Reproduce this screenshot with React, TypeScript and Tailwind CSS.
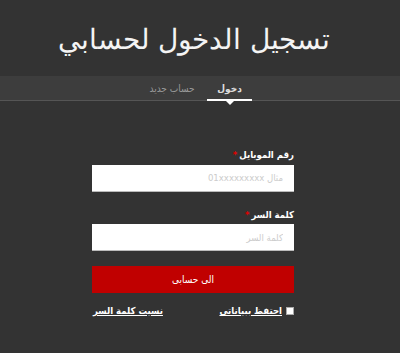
import React from "react";

const small = { fontFamily: '"DejaVu Sans Condensed", "DejaVu Sans", sans-serif' };

export default function App() {
  return (
    <div
      dir="rtl"
      className="w-[400px] h-[353px] bg-[#333333] text-white overflow-hidden"
      style={{ fontFamily: '"DejaVu Sans", "Noto Sans", sans-serif' }}
    >
      <div className="h-[76px] flex items-center justify-center">
        <h1 className="text-[28px] font-light leading-none text-[#f4f4f4] pt-[4px] pr-[12px]">
          تسجيل الدخول لحسابي
        </h1>
      </div>
      <div className="h-[25px] bg-[#3d3d3d] border-b border-[#555555] flex justify-center" style={small}>
        <div className="flex gap-[10px] pr-[1px]">
          <div className="relative w-[45px] flex items-center justify-center text-[10px] font-bold text-[#dddddd]">
            دخول
            <div className="absolute bottom-[-1px] left-0 right-0 h-[2px] bg-white" />
            <div className="absolute bottom-[-5px] left-1/2 -translate-x-1/2 w-0 h-0 border-l-[4px] border-r-[4px] border-t-[4px] border-l-transparent border-r-transparent border-t-white" />
          </div>
          <div className="w-[50px] flex items-center justify-center text-[10px] text-[#9a9a9a] whitespace-nowrap">
            حساب جديد
          </div>
        </div>
      </div>
      <div className="pr-[106px] pl-[92px] pt-[47px]" style={small}>
        <label className="block text-[9.5px] font-bold text-white mb-[2px] leading-[14px]">
          رقم الموبايل<span className="text-[#e00000] mr-[2px]">*</span>
        </label>
        <input
          className="w-full h-[27px] bg-white border-b border-[#bbbbbb] px-[11px] text-[9.5px] text-[#333] placeholder:text-[#cccccc] outline-none"
          style={small}
          placeholder="مثال 01xxxxxxxxx"
        />
        <label className="block text-[9.5px] font-bold text-white mt-[16px] mb-[2px] leading-[14px]">
          كلمة السر<span className="text-[#e00000] mr-[2px]">*</span>
        </label>
        <input
          type="text"
          className="w-full h-[27px] bg-white border-b border-[#bbbbbb] px-[11px] text-[9.5px] text-[#333] placeholder:text-[#cccccc] outline-none"
          style={small}
          placeholder="كلمة السر"
        />
        <button className="w-full h-[27px] mt-[15px] bg-[#c00000] text-white text-[10px]" style={small}>
          الى حسابى
        </button>
        <div className="flex items-center justify-between mt-[11px] h-[14px] text-[9.5px] font-bold">
          <label className="flex items-center gap-[4px]">
            <span className="w-[8px] h-[8px] bg-white border border-[#aaa]" />
            <span className="underline">احتفظ ببياناتي</span>
          </label>
          <a className="underline pl-[1px]">نسيت كلمة السر</a>
        </div>
      </div>
    </div>
  );
}
